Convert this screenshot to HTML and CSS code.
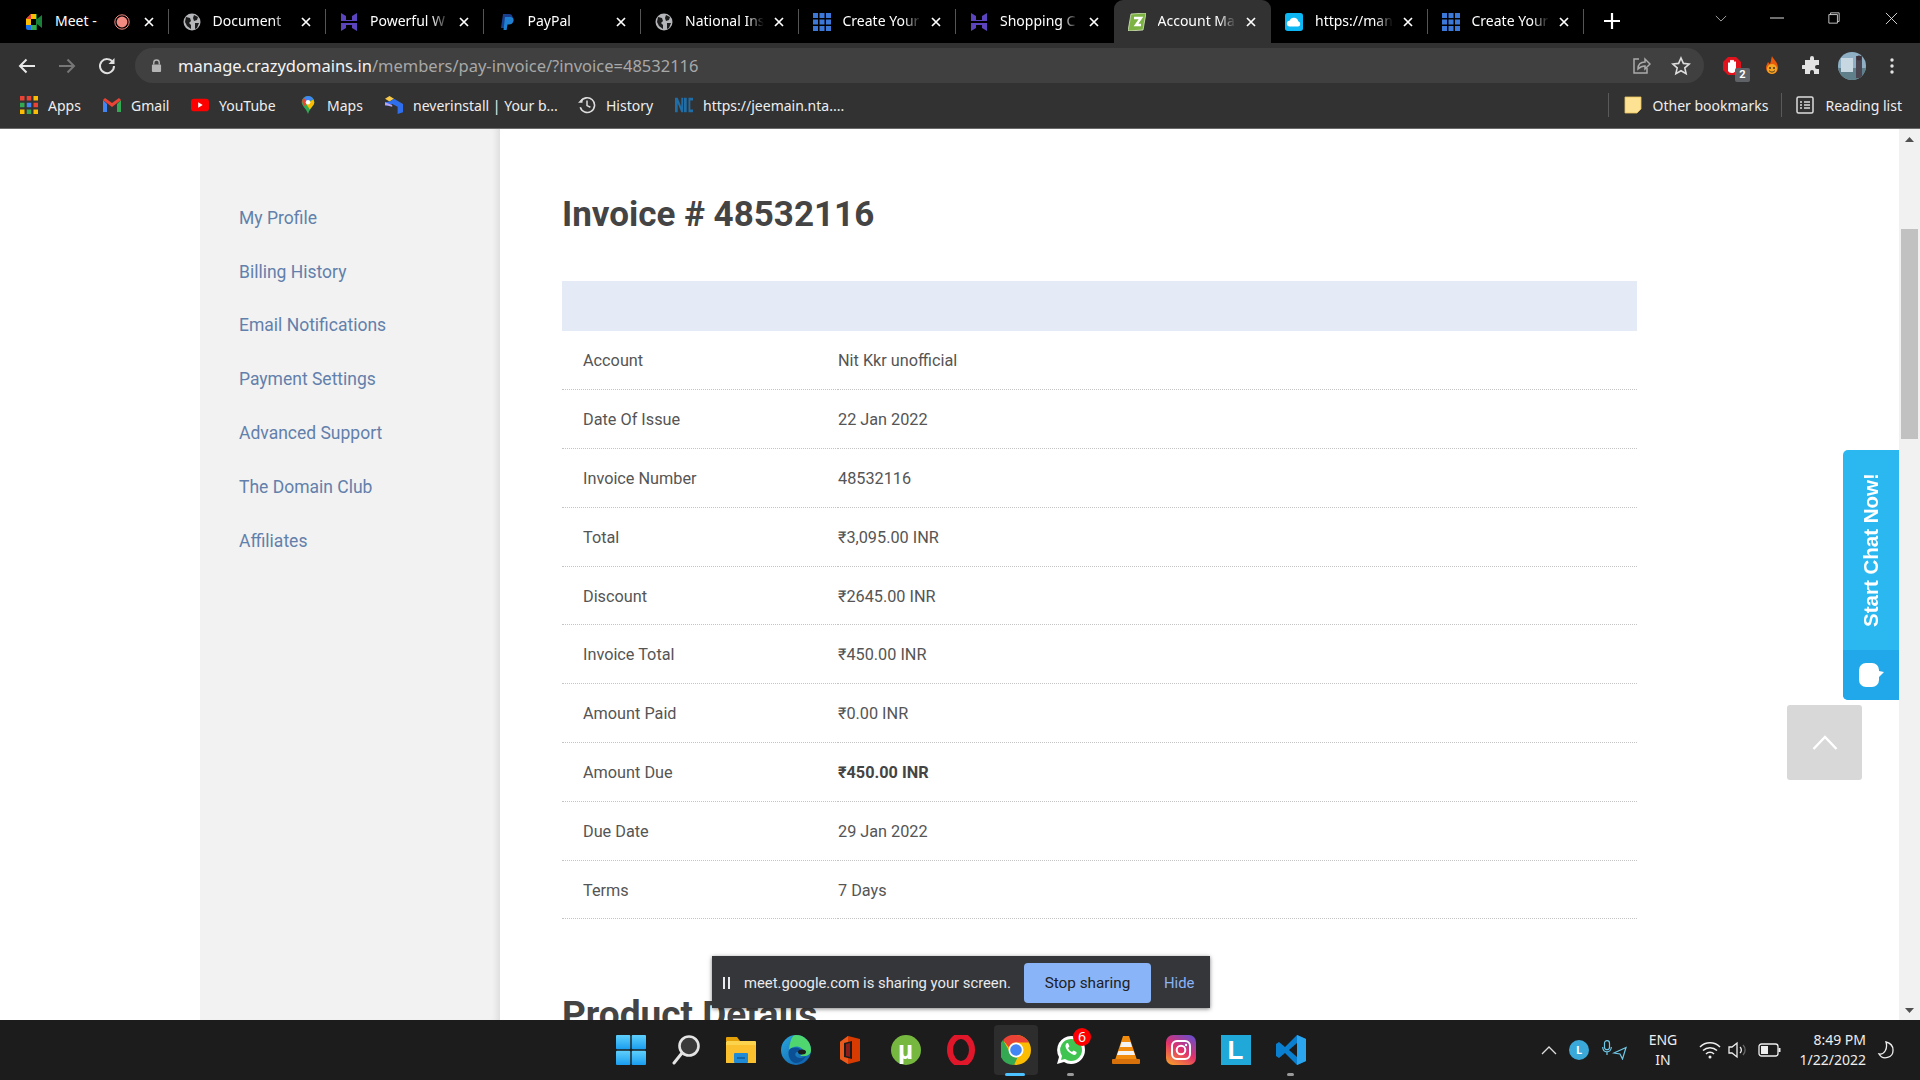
FILE: index.html
```html
<!DOCTYPE html>
<html lang="en">
<head>
    <meta charset="UTF-8">
    <title>Account Manager - Pay Invoice</title>
    <link rel="stylesheet" href="styles.css">
</head>
<body>
    <svg class="defs" width="0" height="0">
        <symbol id="globe" viewBox="0 0 18 18">
            <circle cx="9" cy="9" r="8.5" fill="#b4b6b9"/>
            <path d="M3 4l4 1 1 3-2 2 2 2v4L4 13 2 9zM11 2l4 2-1 3-3 1-1-3zM12 10l4 0-2 5-2 1z" fill="#1c1c1c"/>
        </symbol>
        <symbol id="hbrand" viewBox="0 0 18 18">
            <path d="M1 0l5 3v4h6V3l5-3v8H1zM1 10h16v8l-5-3v-3H6v3l-5 3z" fill="#5b44bd"/>
        </symbol>
        <symbol id="grid" viewBox="0 0 18 18">
            <g fill="#3b78d8">
                <rect x="0" y="0" width="5" height="5"/><rect x="6.5" y="0" width="5" height="5"/><rect x="13" y="0" width="5" height="5"/>
                <rect x="0" y="6.5" width="5" height="5"/><rect x="6.5" y="6.5" width="5" height="5"/><rect x="13" y="6.5" width="5" height="5"/>
                <rect x="0" y="13" width="5" height="5"/><rect x="6.5" y="13" width="5" height="5"/><rect x="13" y="13" width="5" height="5"/>
            </g>
        </symbol>
        <symbol id="close" viewBox="0 0 10 10">
            <path d="M1 1l8 8M9 1l-8 8" stroke="#fff" stroke-width="1.7" fill="none"/>
        </symbol>
    </svg>

    <div class="tabstrip">
        <div class="tab">
            <svg class="favicon" viewBox="0 0 18 18"><path d="M1 6l5-5h6v5H6v6H1z" fill="#fbbc04"/><path d="M1 12h5v5H3a2 2 0 0 1-2-2z" fill="#1a73e8"/><path d="M6 12h6v5H6z" fill="#34a853"/><path d="M12 1v5l5-4v13l-5-4v6h-1V1z" fill="#188038"/><path d="M6 1v5H1z" fill="#ea4335"/></svg>
            <span class="tab-title tab-title-short">Meet -</span>
            <svg class="rec" viewBox="0 0 16 16"><circle cx="8" cy="8" r="7.2" fill="none" stroke="#f28b82" stroke-width="1"/><circle cx="8" cy="8" r="5.4" fill="#f28b82"/></svg>
            <svg class="tab-close"><use href="#close"/></svg>
        </div>
        <div class="tab">
            <svg class="favicon"><use href="#globe"/></svg>
            <span class="tab-title">Document</span>
            <svg class="tab-close"><use href="#close"/></svg>
        </div>
        <div class="tab">
            <svg class="favicon"><use href="#hbrand"/></svg>
            <span class="tab-title">Powerful W</span>
            <svg class="tab-close"><use href="#close"/></svg>
        </div>
        <div class="tab">
            <svg class="favicon" viewBox="0 0 18 18"><path d="M5 1h6c3 0 4 2 3.400 4.500C14 8 12 9.500 9.500 9.500H7.500L6.500 15H3z" fill="#1a3f8f"/><path d="M7 4h5.500c2.500 0 3.500 1.800 3 4-.5 2.500-2.500 3.500-4.500 3.500H9.500L8.600 17H5.500z" fill="#1f7fd1"/></svg>
            <span class="tab-title">PayPal</span>
            <svg class="tab-close"><use href="#close"/></svg>
        </div>
        <div class="tab">
            <svg class="favicon"><use href="#globe"/></svg>
            <span class="tab-title">National Ins</span>
            <svg class="tab-close"><use href="#close"/></svg>
        </div>
        <div class="tab">
            <svg class="favicon"><use href="#grid"/></svg>
            <span class="tab-title">Create Your</span>
            <svg class="tab-close"><use href="#close"/></svg>
        </div>
        <div class="tab tab-nosep">
            <svg class="favicon"><use href="#hbrand"/></svg>
            <span class="tab-title">Shopping C</span>
            <svg class="tab-close"><use href="#close"/></svg>
        </div>
        <div class="tab tab-active tab-nosep">
            <svg class="favicon" viewBox="0 0 18 18"><path d="M3 1l15-1-3 17-15 1z" fill="#7cb342" stroke="#d8e6c0" stroke-width=".8"/><path d="M6 5h7l-5 7h5" fill="none" stroke="#fff" stroke-width="2.400"/></svg>
            <span class="tab-title">Account Ma</span>
            <svg class="tab-close"><use href="#close"/></svg>
        </div>
        <div class="tab tab-narrow">
            <svg class="favicon" viewBox="0 0 20 20"><rect width="20" height="20" rx="3" fill="#0db7f3"/><path d="M5.500 15a3.200 3.200 0 0 1-.4-6.400 5 5 0 0 1 9.600.6 3 3 0 0 1 0 5.800z" fill="#fff"/></svg>
            <span class="tab-title">https://man</span>
            <svg class="tab-close"><use href="#close"/></svg>
        </div>
        <div class="tab tab-narrow">
            <svg class="favicon"><use href="#grid"/></svg>
            <span class="tab-title">Create Your</span>
            <svg class="tab-close"><use href="#close"/></svg>
        </div>
        <svg class="newtab" viewBox="0 0 16 16"><path d="M8 0v16M0 8h16" stroke="#fff" stroke-width="2.200"/></svg>
        <div class="win-controls">
            <svg class="win-chevron" viewBox="0 0 14 8"><path d="M1 1l6 6 6-6" stroke="#bbb" fill="none"/></svg>
            <svg class="win-min" viewBox="0 0 14 2"><path d="M0 1h14" stroke="#ddd"/></svg>
            <svg class="win-restore" viewBox="0 0 14 14"><path d="M3 3V1h10v10h-2M1 3h10v10H1z" stroke="#ddd" fill="none"/></svg>
            <svg class="win-x" viewBox="0 0 14 14"><path d="M1 1l12 12M13 1L1 13" stroke="#ddd" fill="none"/></svg>
        </div>
    </div>

    <div class="toolbar">
        <svg class="nav-btn" viewBox="0 0 20 20"><path d="M18 10H3M9.500 3.500L3 10l6.500 6.500" stroke="#e8e8e8" stroke-width="2" fill="none"/></svg>
        <svg class="nav-btn" viewBox="0 0 20 20"><path d="M2 10h15M10.500 3.500L17 10l-6.500 6.500" stroke="#777" stroke-width="2" fill="none"/></svg>
        <svg class="nav-btn" viewBox="0 0 20 20"><path d="M16 6.500A7 7 0 1 0 17 10" stroke="#e0e0e0" stroke-width="2" fill="none"/><path d="M17.500 2v6h-6z" fill="#e0e0e0"/></svg>
        <div class="omnibox">
            <svg class="lock" viewBox="0 0 12 14"><path d="M3 6V4a3 3 0 0 1 6 0v2" stroke="#b5b5b5" stroke-width="1.500" fill="none"/><rect x="1" y="6" width="10" height="8" rx="1" fill="#b5b5b5"/></svg>
            <span class="url"><span class="url-host">manage.crazydomains.in</span>/members/pay-invoice/?invoice=48532116</span>
            <svg class="omni-share" viewBox="0 0 20 20"><path d="M8 3H3v14h13v-5" stroke="#aaa" stroke-width="1.500" fill="none"/><path d="M7 13c0-5 3-7 7-7V3l5 5-5 5v-3c-3 0-5 1-7 3z" stroke="#aaa" stroke-width="1.500" fill="none"/></svg>
            <svg class="omni-star" viewBox="0 0 20 20"><path d="M10 2l2.400 5.400 5.800.6-4.400 3.900 1.300 5.800L10 14.700 4.900 17.700l1.300-5.800L1.800 8l5.800-.6z" stroke="#ddd" stroke-width="1.600" fill="none"/></svg>
        </div>
        <div class="ext-btn">
            <svg class="ext-icon" viewBox="0 0 20 20"><path d="M6 1h8l5 5v8l-5 5H6l-5-5V6z" fill="#e0121b"/><path d="M6 15V7a1.200 1.200 0 0 1 2 0V4.500a1.200 1.200 0 0 1 2 0a1.200 1.200 0 0 1 2 0V6a1.200 1.200 0 0 1 2 0v6c0 3-1.500 5-4 5s-3-1-4-2z" fill="#fff"/></svg>
            <span class="ext-badge">2</span>
        </div>
        <div class="ext-btn">
            <svg class="ext-icon" viewBox="0 0 20 20"><path d="M10 0c1 3 6 6 6 12a6 6 0 0 1-12 0c0-3 1.500-4 2-6 1 1 1.500 2 2 2 1-2 1-5 2-8z" fill="#e8590c"/><circle cx="10" cy="13" r="5" fill="#f4a522"/><circle cx="8" cy="12" r="1" fill="#432"/><circle cx="12" cy="12" r="1" fill="#432"/><path d="M7 14.500c2 2 4 2 6 0" stroke="#432" fill="none"/></svg>
        </div>
        <div class="ext-btn">
            <svg class="ext-icon" viewBox="0 0 20 20"><path d="M8 2a2 2 0 0 1 4 0v2h5v5h-2a2 2 0 0 0 0 4h2v5h-5v-2a2 2 0 0 0-4 0v2H3v-5H1a2 2 0 0 1 0-4h2V4h5z" fill="#e3e3e3"/></svg>
        </div>
        <div class="ext-btn">
            <svg class="avatar" viewBox="0 0 28 28"><defs><clipPath id="avatarClip"><circle cx="14" cy="14" r="14"/></clipPath></defs><g clip-path="url(#avatarClip)"><rect width="28" height="28" fill="#8fb0c4"/><rect y="16" width="28" height="12" fill="#5f7f8a"/><rect x="3" y="6" width="12" height="14" fill="#c7d8e2"/><rect x="18" y="4" width="6" height="22" fill="#4a4550"/><circle cx="21" cy="6" r="2.500" fill="#3d3038"/></g></svg>
        </div>
        <div class="ext-btn">
            <svg class="ext-dots" viewBox="0 0 4 16"><circle cx="2" cy="2" r="1.700" fill="#e3e3e3"/><circle cx="2" cy="8" r="1.700" fill="#e3e3e3"/><circle cx="2" cy="14" r="1.700" fill="#e3e3e3"/></svg>
        </div>
    </div>

    <div class="bookmarks">
        <div class="bm bm-apps">
            <svg class="bm-icon" viewBox="0 0 16 16"><rect width="4" height="4" fill="#ea4335"/><rect x="6" width="4" height="4" fill="#ea4335"/><rect x="12" width="4" height="4" fill="#fbbc04"/><rect y="6" width="4" height="4" fill="#34a853"/><rect x="6" y="6" width="4" height="4" fill="#4285f4"/><rect x="12" y="6" width="4" height="4" fill="#ea4335"/><rect y="12" width="4" height="4" fill="#fbbc04"/><rect x="6" y="12" width="4" height="4" fill="#34a853"/><rect x="12" y="12" width="4" height="4" fill="#fbbc04"/></svg>
            <span>Apps</span>
        </div>
        <div class="bm bm-gmail">
            <svg class="bm-icon" viewBox="0 0 18 14"><path d="M0 2v12h4V6z" fill="#4285f4"/><path d="M18 2v12h-4V6z" fill="#34a853"/><path d="M0 2l9 7 9-7-2-2-7 5-7-5z" fill="#ea4335"/></svg>
            <span>Gmail</span>
        </div>
        <div class="bm bm-yt">
            <svg class="bm-icon" viewBox="0 0 20 14"><rect width="20" height="14" rx="3.500" fill="#f00"/><path d="M8 4l5 3-5 3z" fill="#fff"/></svg>
            <span>YouTube</span>
        </div>
        <div class="bm bm-maps">
            <svg class="bm-icon" viewBox="0 0 14 20"><path d="M7 0a7 7 0 0 1 7 7c0 4-5 7-7 13-2-6-7-9-7-13a7 7 0 0 1 7-7z" fill="#34a853"/><path d="M7 0a7 7 0 0 1 6 3.500L2 9C0 5 3 0 7 0z" fill="#4285f4"/><path d="M2 2L7 7 3 11C0 8 0 5 2 2z" fill="#ea4335"/><path d="M14 7c0 3-3 5-5 8L5 9l8-5z" fill="#fbbc04"/><circle cx="7" cy="7" r="2.500" fill="#fff"/></svg>
            <span>Maps</span>
        </div>
        <div class="bm bm-never">
            <svg class="bm-icon" viewBox="0 0 20 20"><path d="M5 0l5 3-5 3-5-3z" fill="#f7c948"/><path d="M0 7l5-1 5-3 10 6v9l-6 2V12l-6-3-8 2z" fill="#2f6fed"/><path d="M0 7l8 3v2l-8-2z" fill="#b9a5f0"/></svg>
            <span>neverinstall | Your b...</span>
        </div>
        <div class="bm bm-history">
            <svg class="bm-icon" viewBox="0 0 16 16"><path d="M2.500 5A6.500 6.500 0 1 1 2 10" stroke="#ddd" stroke-width="1.400" fill="none"/><path d="M0 6h4V2z" fill="#ddd"/><path d="M8 4v4.500l3 1.500" stroke="#ddd" stroke-width="1.300" fill="none"/></svg>
            <span>History</span>
        </div>
        <div class="bm bm-nic">
            <svg class="bm-icon" viewBox="0 0 20 20"><g fill="#1f6ea8"><path d="M0 2h3v16H0zM3 2l4 10V2h2v16H7L3 8z"/><rect x="10" y="2" width="3" height="16"/><path d="M20 2v3h-3v10h3v3h-5V2z"/></g></svg>
            <span>https://jeemain.nta....</span>
        </div>
        <div class="bm-right">
            <span class="bm-sep"></span>
            <div class="bm bm-folder">
                <svg class="bm-icon" viewBox="0 0 16 18"><path d="M0 1h16v12l-4 4H0z" fill="#fde293" stroke="#e8c45a" stroke-width=".8"/></svg>
                <span>Other bookmarks</span>
            </div>
            <span class="bm-sep"></span>
            <div class="bm bm-reading">
                <svg class="bm-icon" viewBox="0 0 18 18"><rect x="1" y="1" width="16" height="16" rx="1.500" stroke="#ddd" stroke-width="1.500" fill="none"/><path d="M4 6h2M8 6h6M4 9h2M8 9h6M4 12h2M8 12h6" stroke="#ddd" stroke-width="1.400"/></svg>
                <span>Reading list</span>
            </div>
        </div>
    </div>

    <div class="viewport">
        <div class="site">
            <aside class="sidebar">
                <ul class="side-nav">
                    <li><a href="#">My Profile</a></li>
                    <li><a href="#">Billing History</a></li>
                    <li><a href="#">Email Notifications</a></li>
                    <li><a href="#">Payment Settings</a></li>
                    <li><a href="#">Advanced Support</a></li>
                    <li><a href="#">The Domain Club</a></li>
                    <li><a href="#">Affiliates</a></li>
                </ul>
            </aside>
            <main class="content">
                <h1>Invoice # 48532116</h1>
                <table class="invoice">
                    <thead>
                        <tr><th colspan="2"></th></tr>
                    </thead>
                    <tbody>
                        <tr><td>Account</td><td>Nit Kkr unofficial</td></tr>
                        <tr><td>Date Of Issue</td><td>22 Jan 2022</td></tr>
                        <tr><td>Invoice Number</td><td>48532116</td></tr>
                        <tr><td>Total</td><td>₹3,095.00 INR</td></tr>
                        <tr><td>Discount</td><td>₹2645.00 INR</td></tr>
                        <tr><td>Invoice Total</td><td>₹450.00 INR</td></tr>
                        <tr><td>Amount Paid</td><td>₹0.00 INR</td></tr>
                        <tr><td>Amount Due</td><td><strong>₹450.00 INR</strong></td></tr>
                        <tr><td>Due Date</td><td>29 Jan 2022</td></tr>
                        <tr><td>Terms</td><td>7 Days</td></tr>
                    </tbody>
                </table>
                <h2>Product Details</h2>
            </main>

            <div class="chat-tab">
                <span class="chat-label">Start Chat Now!</span>
                <div class="chat-icon">
                    <svg viewBox="0 0 26 24"><path d="M8 0h6a7 7 0 0 1 7 7v1l5 1-5 5v3a7 7 0 0 1-7 7H8a7 7 0 0 1-7-7V7a7 7 0 0 1 7-7z" fill="#fff"/></svg>
                </div>
            </div>
            <a class="to-top" href="#">
                <svg viewBox="0 0 26 15"><path d="M1.500 14L13 2l11.500 12" stroke="#fff" stroke-width="2.400" fill="none"/></svg>
            </a>
            <div class="share-bar">
                <span class="share-pause"></span>
                <span class="share-text">meet.google.com is sharing your screen.</span>
                <button class="share-stop">Stop sharing</button>
                <span class="share-hide">Hide</span>
            </div>
        </div>
        <div class="scrollbar">
            <svg class="scroll-arrow" viewBox="0 0 9 5"><path d="M4.500 0L9 5H0z" fill="#505050"/></svg>
            <div class="scroll-thumb"></div>
            <svg class="scroll-arrow scroll-arrow-down" viewBox="0 0 9 5"><path d="M4.500 5L9 0H0z" fill="#505050"/></svg>
        </div>
    </div>

    <footer class="taskbar">
        <div class="task-apps">
            <div class="app">
                <svg viewBox="0 0 30 30"><defs><linearGradient id="winBlue" x1="0" y1="0" x2="0" y2="1"><stop offset="0" stop-color="#5fd0fb"/><stop offset="1" stop-color="#1a9df0"/></linearGradient></defs><rect x="0" y="0" width="14.300" height="14.300" rx="1" fill="url(#winBlue)"/><rect x="15.700" y="0" width="14.300" height="14.300" rx="1" fill="url(#winBlue)"/><rect x="0" y="15.700" width="14.300" height="14.300" rx="1" fill="url(#winBlue)"/><rect x="15.700" y="15.700" width="14.300" height="14.300" rx="1" fill="url(#winBlue)"/></svg>
            </div>
            <div class="app">
                <svg viewBox="0 0 30 30"><circle cx="18" cy="11" r="9.500" fill="#3a3a3a" stroke="#e4e4e4" stroke-width="2.600"/><path d="M11 18l-8 10" stroke="#e4e4e4" stroke-width="3" stroke-linecap="round"/></svg>
            </div>
            <div class="app">
                <svg viewBox="0 0 30 30"><path d="M0 3a1 1 0 0 1 1-1h10l3 4H0z" fill="#e3a008"/><rect y="6" width="30" height="22" rx="1" fill="#fcd34d"/><rect y="10" width="30" height="18" rx="1" fill="#fbc02d"/><rect x="8" y="18" width="14" height="10" rx="1" fill="#1f8ad6"/><path d="M11 23h8" stroke="#0b5a96" stroke-width="1.400"/></svg>
            </div>
            <div class="app">
                <svg viewBox="0 0 30 30"><defs><linearGradient id="edgeGrad" x1="0" y1="0" x2="1" y2="1"><stop offset="0" stop-color="#2aa7dd"/><stop offset="1" stop-color="#0d5aa8"/></linearGradient></defs><circle cx="15" cy="15" r="15" fill="url(#edgeGrad)"/><path d="M15 0a15 15 0 0 1 15 15c0 4-3 6-7 6h-4c3-2 4-4 3-6-2-4-9-5-14 0C9 6 11 0 15 0z" fill="#4fd66f"/><path d="M8 15c3-3 8-3 11-1 1 1-1 3-3 3-3 1-2 6 3 6 2 0 4-.5 6-2-2 4-6 7-10 7-5 0-9-7-7-13z" fill="#0b4f94"/><ellipse cx="21" cy="17" rx="4" ry="2.500" fill="#1c1c1c"/></svg>
            </div>
            <div class="app">
                <svg viewBox="0 0 30 30"><path d="M12 1l12 3v22l-12 3-8-5V7z" fill="#d83b01"/><path d="M12 1v28l-8-5V7z" fill="#ea5a1c"/><path d="M8 8l8-2v18l-8-2z" fill="#1c1c1c"/><path d="M10 9l4-1v14l-4-1z" fill="#8c1d18"/></svg>
            </div>
            <div class="app">
                <div class="app-utorrent">µ</div>
            </div>
            <div class="app">
                <svg viewBox="0 0 30 30"><ellipse cx="15" cy="15" rx="11" ry="14" fill="none" stroke="#e0162b" stroke-width="6"/></svg>
            </div>
            <div class="app app-active">
                <svg viewBox="0 0 30 30"><circle cx="15" cy="15" r="15" fill="#fbbc04"/><path d="M15 0a15 15 0 0 1 13 7.500H15a7.500 7.500 0 0 0-7 5L2 5a15 15 0 0 1 13-5z" fill="#ea4335"/><path d="M2 5l6.500 11.500a7.500 7.500 0 0 0 8 6L13 30A15 15 0 0 1 2 5z" fill="#34a853"/><circle cx="15" cy="15" r="7.500" fill="#fff"/><circle cx="15" cy="15" r="5.800" fill="#4285f4"/></svg>
                <span class="app-run app-run-on"></span>
            </div>
            <div class="app">
                <svg viewBox="0 0 30 30"><path d="M15 1a14 14 0 0 1 0 28c-3 0-5-1-7-2l-7 2 2-7A14 14 0 0 1 15 1z" fill="#fff"/><path d="M15 4a11 11 0 0 1 0 22c-2 0-4-1-6-2l-4 1 1-4A11 11 0 0 1 15 4z" fill="#3fc351"/><path d="M10 9c-2 3 2 9 8 11 2 0 3-2 2.500-3l-3-1.500-1.500 1.500c-2-1-3-2-4-4l1.500-1.500L12 8c-1 0-1.500 0-2 1z" fill="#fff"/></svg>
                <span class="app-badge">6</span>
                <span class="app-run"></span>
            </div>
            <div class="app">
                <svg viewBox="0 0 30 30"><path d="M12 1h6l8 24H4z" fill="#f28c0f"/><path d="M10.500 7h9l1.500 5H9zM7.500 16h15l1.500 4H6z" fill="#f4f4f4"/><rect x="1" y="24" width="28" height="5" rx="1" fill="#d8710a"/></svg>
            </div>
            <div class="app">
                <div class="app-insta">
                    <svg viewBox="0 0 30 30"><rect x="6" y="6" width="18" height="18" rx="5" stroke="#fff" stroke-width="2" fill="none"/><circle cx="15" cy="15" r="4.300" stroke="#fff" stroke-width="2" fill="none"/><circle cx="20" cy="10" r="1.200" fill="#fff"/></svg>
                </div>
            </div>
            <div class="app">
                <div class="app-l">L</div>
            </div>
            <div class="app">
                <svg viewBox="0 0 30 30"><path d="M21 0l9 4v22l-9 4-12-12-6 5-3-2v-12l3-2 6 5z" fill="#0a7fd0"/><path d="M21 0l9 4v22l-9 4z" fill="#2aa5ee"/><path d="M21 8L13 15l8 7z" fill="#1c1c1c"/></svg>
                <span class="app-run"></span>
            </div>
        </div>
        <div class="tray">
            <svg class="tray-chevron" viewBox="0 0 16 9"><path d="M1 8l7-7 7 7" stroke="#ddd" stroke-width="1.300" fill="none"/></svg>
            <div class="tray-l">L</div>
            <svg class="tray-mic" viewBox="0 0 25 20"><rect x="2.500" y=".7" width="5" height="9" rx="2.500" stroke="#6fc9e8" stroke-width="1.200" fill="none"/><path d="M.7 7c0 3 2 4.800 4.300 4.800S9.300 10 9.300 7M5 12v3" stroke="#6fc9e8" stroke-width="1.200" fill="none"/><path d="M24 7.500L12 13l6 1 2.500 5z" stroke="#6fc9e8" stroke-width="1.200" fill="none"/></svg>
            <div class="tray-lang">ENG<br>IN</div>
            <svg class="tray-wifi" viewBox="0 0 22 18"><path d="M1 6a14 14 0 0 1 20 0M4 9.500a10 10 0 0 1 14 0M7 13a5.500 5.500 0 0 1 8 0" stroke="#eee" stroke-width="1.500" fill="none"/><circle cx="11" cy="16" r="1.500" fill="#eee"/></svg>
            <svg class="tray-vol" viewBox="0 0 22 18"><path d="M2 6h3l5-4v14l-5-4H2z" stroke="#eee" stroke-width="1.300" fill="none"/><path d="M13 6a4 4 0 0 1 0 6" stroke="#eee" stroke-width="1.300" fill="none"/><path d="M16 4a7 7 0 0 1 0 10" stroke="#666" stroke-width="1.300" fill="none"/></svg>
            <svg class="tray-batt" viewBox="0 0 24 14"><rect x="1" y="1" width="19" height="12" rx="2.500" stroke="#eee" stroke-width="1.300" fill="none"/><rect x="3" y="3" width="7" height="8" fill="#eee"/><path d="M21.500 5v4" stroke="#eee" stroke-width="2"/></svg>
            <div class="tray-clock">8:49 PM<br>1/22/2022</div>
            <svg class="tray-moon" viewBox="0 0 18 18"><path d="M9 1c4 1 7 4 7 8a7.500 7.500 0 0 1-14 4c5 1 9-5 7-12z" stroke="#eee" stroke-width="1.300" fill="none"/></svg>
        </div>
    </footer>
</body>
</html>
```

FILE: styles.css
```css
* {
    box-sizing: border-box;
}

html, body {
    margin: 0;
    padding: 0;
    height: 1080px;
    overflow: hidden;
}

body {
    display: flex;
    flex-direction: column;
    font-family: 'Roboto', sans-serif;
    background: #fff;
}

.defs {
    position: absolute;
}

/* browser tabs */
.tabstrip {
    display: flex;
    align-items: stretch;
    height: 43px;
    padding-left: 11px;
    background: #000;
    color: #fff;
    font-family: 'Noto Sans', sans-serif;
    font-size: 14px;
}

.tab {
    position: relative;
    display: flex;
    align-items: center;
    width: 157.5px;
    padding: 0 15px 0 14px;
}

.tab-narrow {
    width: 156.5px;
}

.tab::after {
    content: '';
    position: absolute;
    right: 0;
    top: 9px;
    height: 25px;
    width: 1px;
    background: #555;
}

.tab-nosep::after {
    display: none;
}

.tab-active {
    background: #323232;
    border-radius: 9px 9px 0 0;
}

.favicon {
    flex: none;
    width: 18px;
    height: 18px;
    margin-right: 12px;
}

.tab-title {
    flex: 1;
    margin-bottom: 2px;
    overflow: hidden;
    white-space: nowrap;
    -webkit-mask-image: linear-gradient(90deg, #000 78%, transparent);
    mask-image: linear-gradient(90deg, #000 78%, transparent);
}

.tab-title-short {
    flex: none;
    width: 47px;
    -webkit-mask-image: none;
    mask-image: none;
}

.rec {
    flex: none;
    width: 16px;
    height: 16px;
    margin: 0 4px 0 12px;
}

.tab-close {
    flex: none;
    width: 10px;
    height: 10px;
    margin-left: 10px;
}

.newtab {
    width: 16px;
    height: 16px;
    margin: 13px 0 0 20px;
}

.win-controls {
    position: relative;
    flex: 1;
}

.win-controls svg {
    position: absolute;
}

.win-chevron {
    left: 95px;
    top: 15px;
    width: 12px;
    height: 7px;
}

.win-min {
    left: 150px;
    top: 17px;
    width: 14px;
    height: 2px;
}

.win-restore {
    left: 208px;
    top: 12px;
    width: 12px;
    height: 12px;
}

.win-x {
    left: 265px;
    top: 12px;
    width: 13px;
    height: 13px;
}

/* address bar */
.toolbar {
    display: flex;
    align-items: flex-end;
    height: 40px;
    padding: 0 8px 0 17px;
    background: #323232;
}

.nav-btn {
    width: 20px;
    height: 20px;
    margin: 0 20px 7px 0;
}

.omnibox {
    display: flex;
    align-items: center;
    flex: 1;
    height: 35px;
    margin-left: -2px;
    margin-right: 8px;
    padding: 0 13px 0 16px;
    border-radius: 18px;
    background: #404040;
    font-family: 'Noto Sans', sans-serif;
    font-size: 16.5px;
    color: #a8a8a8;
}

.lock {
    width: 11px;
    height: 13px;
    margin-right: 16px;
}

.url {
    flex: 1;
}

.url-host {
    color: #f4f4f4;
}

.omni-share {
    width: 20px;
    height: 20px;
    margin-right: 20px;
}

.omni-star {
    width: 20px;
    height: 20px;
}

.ext-btn {
    position: relative;
    display: flex;
    align-items: center;
    justify-content: center;
    width: 40px;
    height: 35px;
}

.ext-icon {
    width: 20px;
    height: 20px;
}

.ext-badge {
    position: absolute;
    left: 23px;
    top: 20px;
    width: 15px;
    height: 14px;
    border-radius: 2px;
    background: #5f6368;
    color: #fff;
    font-size: 11px;
    font-weight: bold;
    line-height: 14px;
    text-align: center;
}

.avatar {
    width: 28px;
    height: 28px;
}

.ext-dots {
    width: 4px;
    height: 16px;
}

/* bookmarks */
.bookmarks {
    display: flex;
    flex: none;
    align-items: center;
    height: 46px;
    padding: 0 0 1px 20px;
    background: #323232;
    border-bottom: 1px solid #6a6a6a;
    color: #eee;
    font-family: 'Noto Sans', sans-serif;
    font-size: 14px;
}

.bm {
    display: flex;
    align-items: center;
    white-space: nowrap;
}

.bm-icon {
    flex: none;
    width: 18px;
    height: 18px;
    margin-right: 10px;
}

.bm-apps {
    width: 83px;
}

.bm-gmail {
    width: 88px;
}

.bm-yt {
    width: 108px;
}

.bm-maps {
    width: 86px;
}

.bm-never {
    width: 193px;
}

.bm-history {
    width: 97px;
}

.bm-right {
    display: flex;
    align-items: center;
    margin-left: auto;
    padding-right: 18px;
}

.bm-sep {
    width: 1px;
    height: 24px;
    background: #5a5a5a;
}

.bm-folder {
    margin: 0 13px 0 15px;
}

.bm-folder .bm-icon,
.bm-reading .bm-icon {
    margin-right: 11px;
}

.bm-reading {
    margin-left: 14px;
}

/* page */
.viewport {
    display: flex;
    flex: 1;
    min-height: 0;
}

.site {
    position: relative;
    display: flex;
    flex: 1;
    overflow: hidden;
    padding-left: 200px;
    background: #fff;
}

.sidebar {
    flex: none;
    width: 300px;
    padding-top: 62px;
    background: #f2f2f2;
    box-shadow: inset -7px 0 6px -4px rgba(0, 0, 0, 0.09);
}

.side-nav {
    margin: 0;
    padding: 0 0 0 39px;
    list-style-type: none;
}

.side-nav li {
    display: flex;
    align-items: center;
    height: 53.8px;
}

.side-nav a {
    color: #6280ab;
    font-size: 17.5px;
    text-decoration: none;
}

.content {
    flex: 1;
    padding: 65px 0 0 62px;
}

h1, h2 {
    margin: 0;
    color: #444;
    line-height: 42px;
    font-weight: bold;
}

h1 {
    font-size: 35px;
}

h2 {
    margin-top: 75px;
    font-size: 37px;
}

.invoice {
    width: 1075px;
    margin-top: 45px;
    border-collapse: collapse;
    color: #555;
    font-size: 16.25px;
}

.invoice th {
    height: 50px;
    padding: 0;
    background: #e4ebf7;
}

.invoice td {
    height: 58.8px;
    padding: 1px 0 0;
    border-bottom: 1px dotted #c4c4c4;
}

.invoice td:first-child {
    width: 276px;
    padding-left: 21px;
}

.invoice strong {
    color: #444;
}

/* chat + back to top */
.chat-tab {
    position: absolute;
    right: 0;
    top: 321px;
    display: flex;
    flex-direction: column;
    width: 56px;
    height: 250px;
    border-radius: 5px 0 0 5px;
    overflow: hidden;
    background: #2bb8f0;
}

.chat-label {
    flex: 1;
    writing-mode: vertical-rl;
    transform: rotate(180deg);
    text-align: center;
    line-height: 56px;
    color: #fff;
    font-family: 'Liberation Sans', sans-serif;
    font-size: 20.5px;
    font-weight: bold;
}

.chat-icon {
    display: flex;
    align-items: center;
    justify-content: center;
    height: 50px;
    background: #20a8ea;
}

.chat-icon svg {
    width: 26px;
    height: 24px;
}

.to-top {
    position: absolute;
    left: 1787px;
    top: 576px;
    display: flex;
    align-items: center;
    justify-content: center;
    width: 75px;
    height: 75px;
    border-radius: 3px;
    background: #d8d8d8;
}

.to-top svg {
    width: 26px;
    height: 15px;
}

.share-bar {
    position: absolute;
    left: 712px;
    top: 827px;
    display: flex;
    align-items: center;
    width: 498px;
    height: 52px;
    padding: 2px 0 0 11px;
    background: #35363a;
    box-shadow: 0 1px 4px rgba(0, 0, 0, 0.5);
    color: #e8eaed;
    font-size: 14.8px;
}

.share-pause {
    width: 7px;
    height: 12px;
    margin-right: 14px;
    border-left: 2px solid #e8eaed;
    border-right: 2px solid #e8eaed;
}

.share-text {
    width: 280px;
    white-space: nowrap;
}

.share-stop {
    width: 127px;
    height: 40px;
    border: none;
    border-radius: 4px;
    background: #8ab4f8;
    color: #202124;
    font-family: 'Roboto', sans-serif;
    font-size: 15.3px;
}

.share-hide {
    margin-left: 13px;
    color: #8ab4f8;
}

.scrollbar {
    position: relative;
    flex: none;
    width: 21px;
    padding-top: 100px;
    background: #f1f1f1;
}

.scroll-thumb {
    width: 17px;
    height: 210px;
    margin-left: 2px;
    background: #c1c1c1;
}

.scroll-arrow {
    position: absolute;
    left: 6px;
    top: 8px;
    width: 9px;
    height: 5px;
}

.scroll-arrow-down {
    top: auto;
    bottom: 7px;
}

/* windows taskbar */
.taskbar {
    position: relative;
    display: grid;
    grid-template-columns: 1fr auto 1fr;
    flex: none;
    height: 60px;
    background: #1c1c1c;
    color: #eee;
    font-family: 'Noto Sans', sans-serif;
}

.task-apps {
    grid-column: 2;
    display: flex;
    margin-left: 1px;
}

.app {
    position: relative;
    display: flex;
    align-items: center;
    justify-content: center;
    width: 55px;
}

.app svg {
    width: 30px;
    height: 30px;
}

.app-active::before {
    content: '';
    position: absolute;
    left: 6px;
    top: 5px;
    bottom: 5px;
    width: 44px;
    border-radius: 4px;
    background: #2d2d2d;
}

.app-active svg {
    position: relative;
}

.app-run {
    position: absolute;
    left: 24px;
    bottom: 4px;
    width: 7px;
    height: 3px;
    border-radius: 2px;
    background: #9a9a9a;
}

.app-run-on {
    left: 17px;
    width: 20px;
    background: #4cc2ff;
}

.app-badge {
    position: absolute;
    left: 30px;
    top: 8px;
    width: 18px;
    height: 18px;
    border-radius: 50%;
    background: #f00;
    color: #fff;
    font-size: 14px;
    line-height: 18px;
    text-align: center;
}

.app-utorrent {
    width: 30px;
    height: 30px;
    border-radius: 50%;
    background: #76b83f;
    color: #fff;
    font-family: 'Liberation Sans', sans-serif;
    font-size: 26px;
    font-weight: bold;
    line-height: 30px;
    text-align: center;
}

.app-insta {
    width: 30px;
    height: 30px;
    border-radius: 7px;
    background: linear-gradient(30deg, #f9a825, #e1306c 50%, #5b51d8);
}

.app-l {
    width: 30px;
    height: 30px;
    background: #1fa8d8;
    color: #fff;
    font-family: 'Liberation Sans', sans-serif;
    font-size: 26px;
    font-weight: bold;
    line-height: 30px;
    text-align: center;
}

.tray {
    grid-column: 3;
    display: flex;
    align-items: center;
    justify-content: flex-end;
    padding-right: 25px;
    font-size: 14px;
    line-height: 20px;
}

.tray-chevron {
    width: 16px;
    height: 9px;
}

.tray-l {
    width: 20px;
    height: 20px;
    margin-left: 12px;
    border-radius: 50%;
    background: #3aa9d9;
    color: #fff;
    font-size: 11px;
    font-weight: bold;
    line-height: 20px;
    text-align: center;
}

.tray-mic {
    width: 25px;
    height: 20px;
    margin: 0 9px 0 13px;
}

.tray-lang {
    width: 36px;
    margin-left: 9px;
    text-align: center;
}

.tray-wifi {
    width: 22px;
    height: 18px;
    margin-left: 18px;
}

.tray-vol {
    width: 22px;
    height: 18px;
    margin-left: 6px;
}

.tray-batt {
    width: 24px;
    height: 14px;
    margin-left: 9px;
}

.tray-clock {
    width: 72px;
    margin-left: 12px;
    text-align: right;
    white-space: nowrap;
}

.tray-moon {
    width: 18px;
    height: 18px;
    margin-left: 11px;
}
```
